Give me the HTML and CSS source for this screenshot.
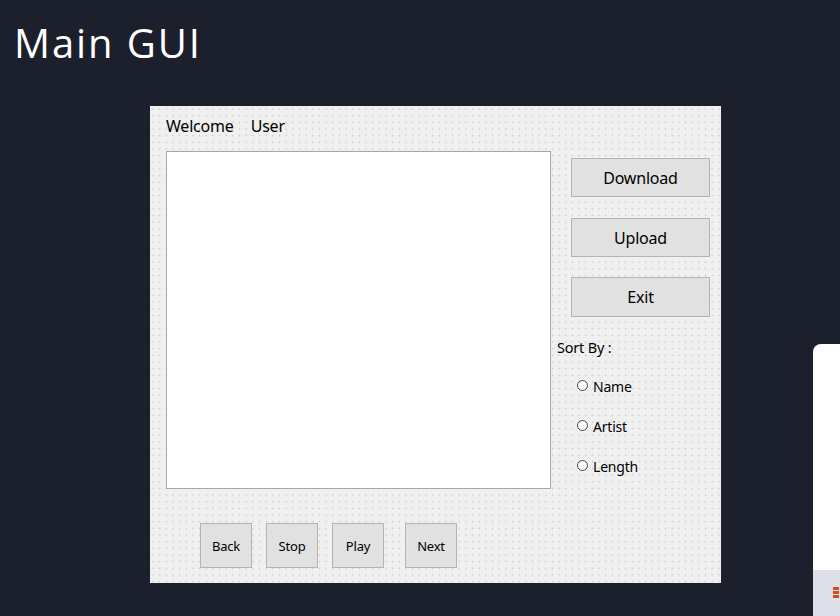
FILE: index.html
```html
<!DOCTYPE html>
<html>
<head>
<meta charset="utf-8">
<link rel="stylesheet" href="styles.css">
</head>
<body>
<h1 class="title">Main GUI</h1>
<div class="window">
  <div class="welcome"><span>Welcome</span><span>User</span></div>
  <div class="main">
    <div class="list"></div>
    <div class="side">
      <button class="btn big first">Download</button>
      <button class="btn big">Upload</button>
      <button class="btn big exit">Exit</button>
      <div class="sort-label">Sort By :</div>
      <label class="radio"><span class="dot"></span>Name</label>
      <label class="radio"><span class="dot"></span>Artist</label>
      <label class="radio"><span class="dot"></span>Length</label>
    </div>
  </div>
  <div class="controls">
    <button class="btn small">Back</button>
    <button class="btn small">Stop</button>
    <button class="btn small">Play</button>
    <button class="btn small next">Next</button>
  </div>
</div>
<div class="side-card"></div>
<div class="side-tray"><span class="tray-icon"></span></div>
</body>
</html>
```
FILE: styles.css
```css
html, body {
  margin: 0;
  padding: 0;
  background: #1c202c;
  height: 616px;
  overflow: hidden;
}
body {
  position: relative;
  font-family: "Noto Sans", "DejaVu Sans", sans-serif;
}
.title {
  margin: 0;
  padding: 18px 0 0 14px;
  height: 88px;
  box-sizing: border-box;
  font-family: "Open Sans", sans-serif;
  font-weight: 400;
  font-size: 40px;
  line-height: 50px;
  letter-spacing: 1.9px;
  color: #ffffff;
}
.window {
  margin: 18px 0 0 150px;
  width: 571px;
  height: 477px;
  box-sizing: border-box;
  padding-left: 16px;
  background-color: #f0f0f0;
  background-image: radial-gradient(circle, #bdbdbd 0.7px, transparent 1px);
  background-size: 6.6667px 6.6667px;
  background-position: -0.3px -0.3px;
  display: flex;
  flex-direction: column;
  color: #000;
}
.welcome {
  height: 45px;
  display: flex;
  gap: 17px;
  align-items: flex-start;
  padding-top: 9px;
  box-sizing: border-box;
  font-size: 16px;
  line-height: 22px;
  letter-spacing: -0.2px;
}
.main {
  display: flex;
  height: 338px;
}
.list {
  width: 385px;
  height: 338px;
  box-sizing: border-box;
  background: #fff;
  border: 1px solid #a6a6a6;
}
.side {
  display: flex;
  flex-direction: column;
  padding-top: 7px;
}
.btn {
  font-family: "Noto Sans", "DejaVu Sans", sans-serif;
  background: #e1e1e1;
  border: 1px solid #b4b4b4;
  color: #000;
  padding: 0;
  box-sizing: border-box;
}
.big {
  width: 139px;
  height: 39px;
  margin-left: 20px;
  margin-bottom: 20px;
  font-size: 16px;
  letter-spacing: -0.2px;
}
.big.first { margin-bottom: 21px; }
.big.exit { height: 40px; }
.sort-label {
  margin-left: 6px;
  margin-top: 0;
  font-size: 14.5px;
  line-height: 20px;
  letter-spacing: -0.2px;
}
.radio {
  display: flex;
  align-items: center;
  margin-left: 26px;
  margin-top: 19px;
  height: 20px;
  font-size: 14px;
  letter-spacing: -0.2px;
}
.radio + .radio { margin-top: 20px; }
.dot {
  width: 9px;
  height: 9px;
  border: 1px solid #444;
  border-radius: 50%;
  background: #fff;
  margin-right: 5px;
  margin-top: -2px;
}
.controls {
  display: flex;
  padding: 34px 0 0 34px;
  gap: 14px;
}
.small {
  width: 52px;
  height: 45px;
  font-size: 13px;
  letter-spacing: -0.2px;
}
.next { margin-left: 7px; }
.side-card {
  position: absolute;
  left: 813px;
  top: 344px;
  width: 40px;
  height: 226px;
  background: #fff;
  border-top-left-radius: 8px;
}
.side-tray {
  position: absolute;
  left: 813px;
  top: 570px;
  width: 40px;
  height: 46px;
  background: #dde0e8;
}
.tray-icon {
  position: absolute;
  left: 20px;
  top: 17px;
  width: 6px;
  height: 12px;
  background: repeating-linear-gradient(#e0461c 0 3px, transparent 3px 4px);
}
```
